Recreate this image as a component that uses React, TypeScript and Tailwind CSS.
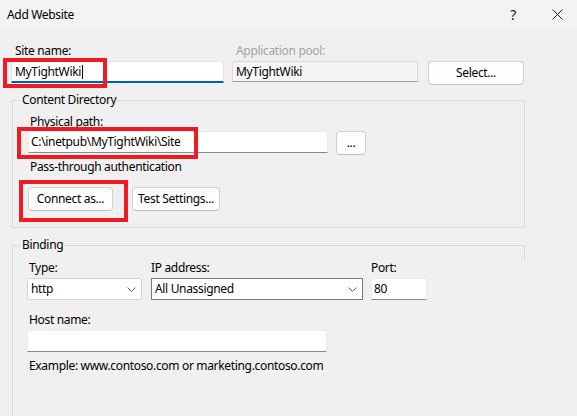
import React from "react";

const Chevron = () => (
  <svg width="9" height="5" viewBox="0 0 9 5" className="shrink-0">
    <polyline points="0.5,0.5 4.5,4.5 8.5,0.5" fill="none" stroke="#606060" strokeWidth="1" />
  </svg>
);

export default function App() {
  return (
    <div
      className="relative w-[577px] h-[416px] overflow-hidden bg-[#f0f0f0] text-[12px] tracking-[-0.33px] text-black"
      style={{ fontFamily: '"Noto Sans", "Open Sans", sans-serif' }}
    >
      {/* Title bar */}
      <div className="h-[29px] bg-[#f3f3f3] flex items-center">
        <div className="pl-[7px] leading-[16px]">Add Website</div>
        <div className="ml-auto flex items-center">
          <span className="text-[14px] leading-[16px] text-[#1a1a1a] mr-[36px]">?</span>
          <svg width="11" height="11" viewBox="0 0 11 11" className="mr-[14px]">
            <path d="M0.5 0.5 L10.5 10.5 M10.5 0.5 L0.5 10.5" stroke="#1a1a1a" strokeWidth="1" fill="none" />
          </svg>
        </div>
      </div>

      <div className="pl-[11px]">
        {/* Row 1 */}
        <div className="flex mt-[14px]">
          <div className="w-[213px]">
            <div className="pl-[4px] h-[16px] leading-[16px]">Site name:</div>
            <div className="mt-[2px] h-[22px] bg-white border border-[#e5e5e5] border-b-2 border-b-[#005fb8] rounded-t-[3px] flex items-center pl-[3px]">
              <span className="leading-[16px]">MyTightWiki</span>
              <span className="inline-block w-px h-[14px] bg-black ml-[1px]" />
            </div>
          </div>
          <div className="w-[186px] ml-[8px]">
            <div className="pl-[4px] h-[16px] leading-[16px] text-[#a3a3a3]">Application pool:</div>
            <div className="mt-[2px] h-[21px] bg-[#f5f5f5] border border-[#dadada] border-b-[#9a9a9a] rounded-t-[3px] flex items-center pl-[3px]">
              <span className="leading-[16px]">MyTightWiki</span>
            </div>
          </div>
          <div className="ml-[10px] pt-[18px]">
            <div className="w-[96px] h-[24px] bg-[#fdfdfd] border border-[#d0d0d0] border-b-[#c0c0c0] rounded-[4px] flex items-center justify-center leading-[16px]">
              Select...
            </div>
          </div>
        </div>

        {/* Content Directory */}
        <div className="relative mt-[15px] ml-[1px] w-[513px] h-[128px] border border-[#dcdcdc] pl-[15px]">
          <div className="absolute -top-[9px] left-[8px] px-[1px] bg-[#f0f0f0] leading-[16px]">Content Directory</div>
          <div className="mt-[13px] pl-[2px] h-[16px] leading-[16px]">Physical path:</div>
          <div className="mt-[1px] flex items-start">
            <div className="w-[300px] h-[22px] bg-white border border-[#ececec] border-b-[#8a8a8a] rounded-t-[3px] flex items-center pl-[2px]">
              <span className="leading-[16px]">C:\inetpub\MyTightWiki\Site</span>
            </div>
            <div className="ml-[8px] w-[30px] h-[24px] bg-[#fdfdfd] border border-[#d0d0d0] border-b-[#c0c0c0] rounded-[4px] flex items-center justify-center leading-[16px]">
              ...
            </div>
          </div>
          <div className="mt-[4px] pl-[2px] h-[16px] leading-[16px]">Pass-through authentication</div>
          <div className="mt-[12px] flex">
            <div className="w-[85px] h-[24px] bg-[#fdfdfd] border border-[#d0d0d0] border-b-[#c0c0c0] rounded-[4px] flex items-center justify-center leading-[16px]">
              Connect as...
            </div>
            <div className="ml-[19px] w-[88px] h-[24px] bg-[#fdfdfd] border border-[#d0d0d0] border-b-[#c0c0c0] rounded-[4px] flex items-center justify-center leading-[16px]">
              Test Settings...
            </div>
          </div>
        </div>

        {/* Binding */}
        <div className="relative mt-[17px] ml-[1px] w-[513px] h-[200px] border-t border-l border-[#dcdcdc] pl-[14px]">
          <div className="absolute -top-[1px] -right-0 w-px h-[16px] bg-[#dcdcdc]" />
          <div className="absolute -top-[9px] left-[8px] px-[1px] bg-[#f0f0f0] leading-[16px]">Binding</div>
          <div className="flex mt-[14px]">
            <div className="w-[115px]">
              <div className="pl-[2px] h-[16px] leading-[16px]">Type:</div>
              <div className="mt-[2px] h-[22px] bg-white border border-[#d4d4d4] rounded-[3px] flex items-center pl-[3px] pr-[5px]">
                <span className="leading-[16px]">http</span>
                <span className="ml-auto"><Chevron /></span>
              </div>
            </div>
            <div className="w-[212px] ml-[9px]">
              <div className="h-[16px] leading-[16px]">IP address:</div>
              <div className="mt-[2px] h-[22px] bg-white border border-[#7a7a7a] flex items-center pl-[3px] pr-[5px]">
                <span className="leading-[16px]">All Unassigned</span>
                <span className="ml-auto"><Chevron /></span>
              </div>
            </div>
            <div className="w-[56px] ml-[8px]">
              <div className="h-[16px] leading-[16px]">Port:</div>
              <div className="mt-[2px] h-[22px] bg-white border border-[#ececec] border-b-[#8a8a8a] flex items-center pl-[2px]">
                <span className="leading-[16px]">80</span>
              </div>
            </div>
          </div>
          <div className="mt-[12px] pl-[2px] h-[16px] leading-[16px]">Host name:</div>
          <div className="mt-[2px] w-[300px] h-[22px] bg-white border border-[#ececec] border-b-[#8a8a8a]" />
          <div className="mt-[6px] pl-[2px] h-[16px] leading-[16px]">Example: www.contoso.com or marketing.contoso.com</div>
        </div>
      </div>

      {/* Annotation boxes */}
      <div className="absolute left-[3px] top-[58px] w-[104px] h-[30px] border-4 border-[#ed1c24]" />
      <div className="absolute left-[17px] top-[127px] w-[181px] h-[32px] border-4 border-[#ed1c24]" />
      <div className="absolute left-[19px] top-[180px] w-[109px] h-[42px] border-4 border-[#ed1c24]" />
    </div>
  );
}
